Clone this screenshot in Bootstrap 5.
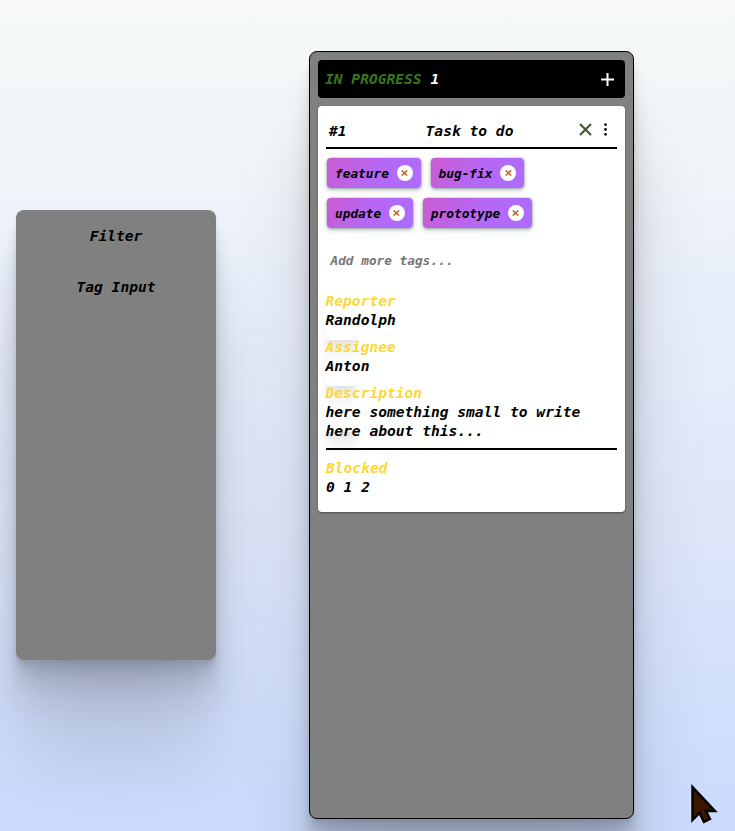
<!DOCTYPE html>
<html lang="en">
<head>
<meta charset="utf-8">
<meta name="viewport" content="width=device-width, initial-scale=1">
<title>Task board</title>
<link href="https://cdn.jsdelivr.net/npm/bootstrap@5.3.0/dist/css/bootstrap.min.css" rel="stylesheet">
<style>
:root{--layered:0 2.8px 2.2px rgba(0,0,0,.034),0 6.7px 5.3px rgba(0,0,0,.048),0 12.5px 10px rgba(0,0,0,.06),0 22.3px 17.9px rgba(0,0,0,.072),0 41.8px 33.4px rgba(0,0,0,.086),0 100px 80px rgba(0,0,0,.12)}
body{height:831px;overflow:hidden;color:#000;background:linear-gradient(180deg,#f7f9f8 0%,#eff4f8 22%,#eaf0fa 32%,#dfe7f9 60%,#cddcfd 95%);font:italic bold 14.6px/19px "DejaVu Sans Mono",monospace}
.board{padding:51px 0 0 16px;gap:93px}
.filter-panel{width:200px;height:450px;margin-top:159px;padding-top:16px;border-radius:8px;background:#808080;box-shadow:var(--layered)}
.filter-panel div+div{margin-top:32px}
.lane{width:325px;height:768px;padding:8px;border:1px solid #000;border-radius:8px;background:#808080;box-shadow:var(--layered)}
.lane-head{height:38px;padding:0 11px 0 7px;border-radius:4px;background:#000;color:#fff}
.lane-head div{padding-bottom:2px}
.lane-name{color:#38761d}
.task{height:406px;margin-top:8px;padding:8px;border-radius:4px;background:#fff;box-shadow:0 1px 2px rgba(0,20,20,.45)}
.task-head{height:35px;padding:0 7px 0 3px;border-bottom:2px solid #000}
.task-head .task-title{margin-left:79px}
.task-head svg{margin-bottom:2px}
.tag-list{padding:9px 1px 0;gap:10px}
.tag-chip{height:30px;padding:0 8px;border-radius:4px;font-size:12.8px;background:linear-gradient(120deg,#cb5bd1,#b568f4 50%,#ad6cff);box-shadow:0 0 1px 1px rgba(90,125,100,.22),0 2px 4px rgba(0,20,50,.3)}
.tag-x{width:16px;height:16px;margin-left:7.6px;border-radius:50%;background:#fff}
.tag-hint{margin:23px 0 21px 4.5px;font-size:12.75px;color:#757575}
.field{position:relative;z-index:0;margin:0 0 8px -.5px}
.field-name{color:#fdd835}
.ghost{position:absolute;z-index:-1;left:.5px;bottom:-11px;width:30px;height:15px;background:#fff;box-shadow:0 2.8px 2.2px rgba(0,0,0,.034),0 6.7px 5.3px rgba(0,0,0,.04),0 12.5px 10px rgba(0,0,20,.05),0 22px 18px rgba(0,0,20,.03)}
.field-long .ghost{bottom:8px}
.divider{height:2px;background:#000;margin:0 0 8px}
.pointer{position:absolute;left:690px;top:784px}
svg{display:block}
</style>
</head>
<body>
<main class="board d-flex align-items-start">
  <aside class="filter-panel text-center flex-shrink-0"><div>Filter</div><div>Tag Input</div></aside>
  <section class="lane flex-shrink-0">
    <header class="lane-head d-flex align-items-center justify-content-between">
      <div><span class="lane-name">IN PROGRESS</span> 1</div>
      <svg width="13" height="13" viewBox="0 0 13 13"><path d="M6.5 0v13M0 6.5h13" stroke="#fff" stroke-width="2"/></svg>
    </header>
    <article class="task">
      <div class="task-head d-flex align-items-center">
        <span>#1</span><span class="task-title">Task to do</span>
        <svg class="ms-auto" width="31" height="14" viewBox="0 0 31 14"><path d="M1 1l11 11M12 1L1 12" stroke="#435839" stroke-width="2.2"/><g fill="#111"><circle cx="26.5" cy="1.7" r="1.4"/><circle cx="26.5" cy="6.5" r="1.4"/><circle cx="26.5" cy="11.3" r="1.4"/></g></svg>
      </div>
      <div class="tag-list d-flex flex-wrap">
        <span class="tag-chip d-flex align-items-center">feature<span class="tag-x d-flex align-items-center justify-content-center"><svg width="7" height="6" viewBox="0 0 7 6"><path d="M.8.5l5.4 5M6.2.5L.8 5.5" stroke="#c06b3a" stroke-width="1.7"/></svg></span></span>
        <span class="tag-chip d-flex align-items-center">bug-fix<span class="tag-x d-flex align-items-center justify-content-center"><svg width="7" height="6" viewBox="0 0 7 6"><path d="M.8.5l5.4 5M6.2.5L.8 5.5" stroke="#c06b3a" stroke-width="1.7"/></svg></span></span>
        <span class="tag-chip d-flex align-items-center">update<span class="tag-x d-flex align-items-center justify-content-center"><svg width="7" height="6" viewBox="0 0 7 6"><path d="M.8.5l5.4 5M6.2.5L.8 5.5" stroke="#c06b3a" stroke-width="1.7"/></svg></span></span>
        <span class="tag-chip d-flex align-items-center">prototype<span class="tag-x d-flex align-items-center justify-content-center"><svg width="7" height="6" viewBox="0 0 7 6"><path d="M.8.5l5.4 5M6.2.5L.8 5.5" stroke="#c06b3a" stroke-width="1.7"/></svg></span></span>
      </div>
      <div class="tag-hint">Add more tags...</div>
      <div class="field"><i class="ghost"></i><div class="field-name">Reporter</div><div>Randolph</div></div>
      <div class="field"><i class="ghost"></i><div class="field-name">Assignee</div><div>Anton</div></div>
      <div class="field field-long"><i class="ghost"></i><div class="field-name">Description</div><div>here something small to write here about this...</div></div>
      <div class="divider"></div>
      <div><div class="field-name">Blocked</div><div>0 1 2</div></div>
    </article>
  </section>
</main>
<svg class="pointer" width="30" height="42" viewBox="0 0 30 42"><path d="M2.5 3v33l7-7 4.5 9 6-3-4-8h9z" fill="#3b1700" stroke="#000" stroke-width="2.4"/></svg>
<script src="https://cdn.jsdelivr.net/npm/bootstrap@5.3.0/dist/js/bootstrap.bundle.min.js"></script>
</body>
</html>
